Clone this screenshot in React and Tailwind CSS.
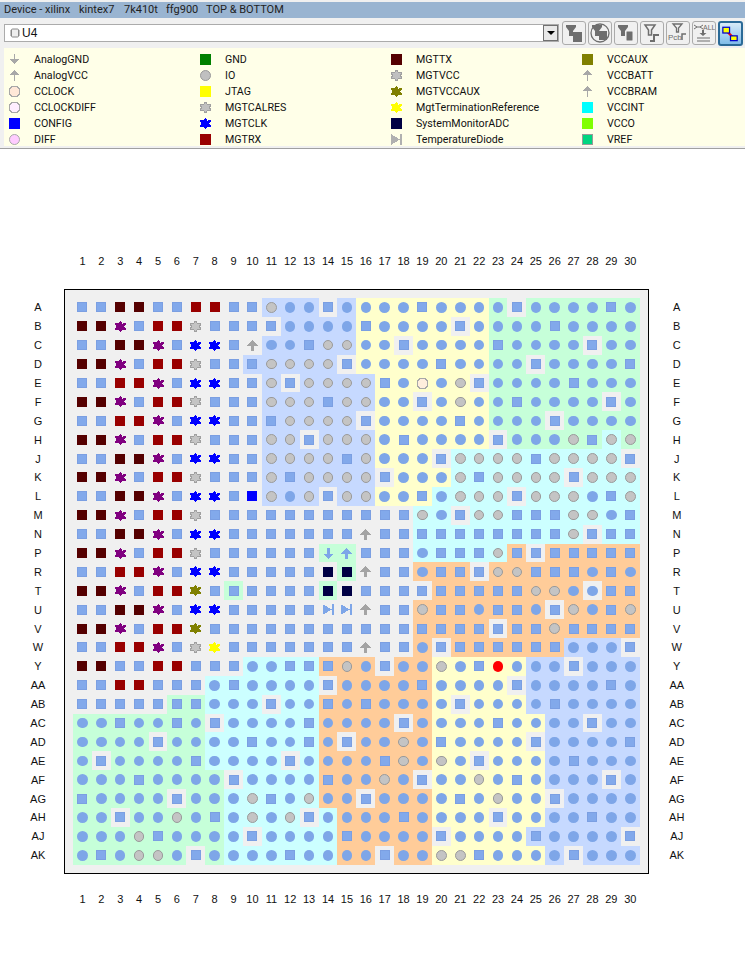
const COLS = Array.from({ length: 30 }, (_, i) => i + 1)
const ROWS = ['A', 'B', 'C', 'D', 'E', 'F', 'G', 'H', 'J', 'K', 'L', 'M', 'N', 'P', 'R', 'T', 'U', 'V', 'W', 'Y', 'AA', 'AB', 'AC', 'AD', 'AE', 'AF', 'AG', 'AH', 'AJ', 'AK']

const PINS = [
  'ssmmssrrssoccsc' + 'cccsccccsccccsc',
  'mmpsrrgsssscccc' + 'sccccsccccscccc',
  'ssmmpsbbsaccsoo' + 'ccsccccsccccscc',
  'mmpsrrgsssoooos' + 'ccccsccccsccccs',
  'ssrrpsbbssosooo' + 'oschcosccccsccc',
  'mmpsrrgsssoooso' + 'occscoccsccccsc',
  'ssrrpsbbsssoooo' + 'sccccsccccscccc',
  'mmpsrrgsssoosoo' + 'ocsccccscccosoo',
  'ssmmpsbbssoooos' + 'occcsoooosoooos',
  'mmpsrrgsssosooo' + 'oscccosoooosooo',
  'ssmmpsbbsBocoso' + 'occscooosooocso',
  'mmpsrrgssssssss' + 'sssocsoosssoocs',
  'ssmmpsbbsssssss' + 'assssssssssosss',
  'mmpsrrgssssssdu' + 'ssscsssosssssss',
  'ssrrpsbbsssssnn' + 'asscsssoossscsc',
  'mmpsrrvssssssnn' + 'sssssssssooccss',
  'ssmmpsbbssssstt' + 'assosscsscsocso',
  'mmpsrrvssssssss' + 'ssssssssssossss',
  'ssrrpsgysssssss' + 'asscssssssscccs',
  'mmssrrssscc' + 'ssso' + 'csccocsRcccsccc',
  'ssrrssscsccccsc' + 'cccsccccsccccsc',
  'ssssssscccsccsc' + 'sccccsccccscccc',
  'ccsccscsccccscc' + 'ccsccccsccccscc',
  'ccccsccccsccscs' + 'ccocsccccsccccs',
  'csccccsccccsccc' + 'csococsccccsccc',
  'cccsccccsccccsc' + 'cocsccocsccccsc',
  'sccccscccoscocc' + 'sccccscoccscccc',
  'ccsccocscocoscc' + 'ccsccccsccccscc',
  'cccosccccsccccs' + 'ccccsccccsccccs',
  'cscoocsccccsccc' + 'csccoosccccsccc',
]

const BANKS = [
  '..........BBB.B' + 'YYYYYYYG.GGGGGG',
  '...........BBBB' + 'YYYYY.YGGGGGGGG',
  '..........BBBBB' + 'YY.YYYYGGGGG.GG',
  '.........BBBBB.' + 'YYYYYYYGG.GGGGG',
  '..........B.BBB' + 'BYYYYY.GGGGGGGG',
  '..........BBBBB' + 'BYY.YYYGGGGGG.G',
  '..........BBBBB' + '.YYYYYYGGG.GGGG',
  '..........BB.BB' + 'BYYYYYY.GGGGGCG',
  '..........BBBBB' + 'BYYY.CCCCCCCCC.',
  '..........BBBBB' + 'B.YYYCCCCCC.CCC',
  '..........BBB.B' + 'BYYYCCCC.CCCCCC',
  '...............' + '...CC.CCCCCCCCC',
  '...............' + '...CCCCCCCCC.CC',
  '.............GG' + '...CCCCCO.OOOOO',
  '..............G' + '...OOO.OOOOOOOO',
  '........G....G.' + '....OOOOOOOO.OO',
  '...............' + '...OOOOOOO.OOOO',
  '...............' + '...OOOO.OOOOOOO',
  '...............' + '...O.OOOOOOBBB.',
  '.........CCCCOO' + 'O.OOYYYYYBB.BBB',
  '.......CCCCCC.O' + 'OOOOYYYY.BBBBBB',
  '.....GGCCC.CCOO' + 'OOOOY.YYYBBBBBB',
  'GGGGGGG.CCCCCOO' + 'OO.OYYYYYYBB.BB',
  'GGGG.GGCCCCCCO.' + 'OOOOYYYYY.BBBBB',
  'G.GGGGGCCCC.COO' + 'OOOOYY.YYYBBBBB',
  'GGGGGGGG.CCCCOO' + 'OOO.YYYYYYBBB.B',
  'GGGGG.GGCCCCCOO' + '.OOOYYYYYY.BBBB',
  'GG.GGGGGCCCC.CO' + 'OOOOYYY.YYBBBBB',
  'GGGGGGGGC.CCCCO' + 'OOOO.YYYYBBBBB.',
  'GGGGGG.GCCCCCCO' + 'O.OOYYYYYYB.BBB',
]

const BANK_BG = {
  '.': 'bg-[#f0f0f0]',
  B: 'bg-[#c6d9ff]',
  Y: 'bg-[#ffffcc]',
  G: 'bg-[#c6ffd9]',
  C: 'bg-[#ccffff]',
  O: 'bg-[#ffcc99]',
}

const STAR = '5.5,-0.3 7.5,2.5 11.2,2.2 9.5,5.5 11.2,8.8 7.5,8.5 5.5,11.3 3.5,8.5 -0.2,8.8 1.5,5.5 -0.2,2.2 3.5,2.5'
const HEX = '3,0.5 8,0.5 10.5,3 10.5,8 8,10.5 3,10.5 0.5,8 0.5,3'
const ARROW_UP = '5.5,0 11,5.5 7,5.5 7,11 4,11 4,5.5 0,5.5'
const ARROW_DOWN = '5.5,11 11,5.5 7,5.5 7,0 4,0 4,5.5 0,5.5'

function Square({ className }) {
  return <div className={`w-[10px] h-[10px] ${className}`} />
}

function Dot({ className }) {
  return <div className={`w-[10.5px] h-[10.5px] rounded-full ${className}`} />
}

function Shape({ children }) {
  return (
    <svg width="11" height="11" viewBox="0 0 11 11" shapeRendering="crispEdges" className="block flex-none">
      {children}
    </svg>
  )
}

function Pin({ kind }) {
  switch (kind) {
    case 's':
      return <Square className="border border-[#7b9fe2] bg-[#82a9eb]" />
    case 'm':
      return <Square className="bg-[#550000]" />
    case 'r':
      return <Square className="bg-[#990000]" />
    case 'n':
      return <Square className="bg-[#000044]" />
    case 'B':
      return <Square className="bg-[#0000ff]" />
    case 'p':
      return <Shape><polygon points={STAR} fill="#800080" /></Shape>
    case 'b':
      return <Shape><polygon points={STAR} fill="#0000ff" /></Shape>
    case 'v':
      return <Shape><polygon points={STAR} fill="#808000" /></Shape>
    case 'y':
      return <Shape><polygon points={STAR} fill="#ffff00" /></Shape>
    case 'g':
      return <Shape><polygon points={STAR} fill="#c4c4c4" stroke="#a0a0a0" /></Shape>
    case 'c':
      return <Dot className="bg-[#7ea6e8]" />
    case 'o':
      return <Dot className="border border-[#9a9a9a] bg-[#c4c4c4]" />
    case 'R':
      return <Dot className="bg-[#ff0000]" />
    case 'h':
      return <Shape><polygon points={HEX} fill="#ffeedd" stroke="#a8a8a8" /></Shape>
    case 'a':
      return <Shape><polygon points={ARROW_UP} fill="#a4a4a4" /></Shape>
    case 'u':
      return <Shape><polygon points={ARROW_UP} fill="#7ea6e8" /></Shape>
    case 'd':
      return <Shape><polygon points={ARROW_DOWN} fill="#7ea6e8" /></Shape>
    case 't':
      return <Shape><path d="M0 0.5 L9 5.5 L0 10.5 Z M9 0 H11 V11 H9 Z" fill="#7ea6e8" /></Shape>
    default:
      return null
  }
}

function LegendIcon({ type }) {
  switch (type) {
    case 'gnd':
      return <Shape><path d="M5 0 H6 V5 H11 L5.5 10 L0 5 H5 Z" fill="#a8a8a8" /></Shape>
    case 'vcc':
      return <Shape><polygon points="5.5,0 11,5 6,5 6,11 5,11 5,5 0,5" fill="#a8a8a8" /></Shape>
    case 'cclock':
      return <Shape><polygon points={HEX} fill="#ffe8d8" stroke="#a8a8a8" /></Shape>
    case 'cclockdiff':
      return <Shape><polygon points={HEX} fill="#ffeeff" stroke="#a8a8a8" /></Shape>
    case 'diff':
      return <div className="w-[11px] h-[11px] rounded-full border border-[#a8a8a8] bg-[#ffccff]" />
    case 'io':
      return <div className="w-[11px] h-[11px] rounded-full border border-[#9a9a9a] bg-[#c0c0c0]" />
    case 'grayStar':
      return <Shape><polygon points={STAR} fill="#c0c0c0" stroke="#a0a0a0" /></Shape>
    case 'blueStar':
      return <Shape><polygon points={STAR} fill="#0000ff" /></Shape>
    case 'oliveStar':
      return <Shape><polygon points={STAR} fill="#808000" /></Shape>
    case 'yellowStar':
      return <Shape><polygon points={STAR} fill="#ffff00" /></Shape>
    case 'diode':
      return <Shape><path d="M0 0 L9 5.5 L0 11 Z M9 0 H11 V11 H9 Z" fill="#b0b0b0" /></Shape>
    default:
      return <div className={`w-[11px] h-[11px] ${type}`} />
  }
}

const LEGEND = [
  [['gnd', 'AnalogGND'], ['vcc', 'AnalogVCC'], ['cclock', 'CCLOCK'], ['cclockdiff', 'CCLOCKDIFF'], ['bg-[#0000ff]', 'CONFIG'], ['diff', 'DIFF']],
  [['bg-[#008000]', 'GND'], ['io', 'IO'], ['bg-[#ffff00]', 'JTAG'], ['grayStar', 'MGTCALRES'], ['blueStar', 'MGTCLK'], ['bg-[#990000]', 'MGTRX']],
  [['bg-[#550000]', 'MGTTX'], ['grayStar', 'MGTVCC'], ['oliveStar', 'MGTVCCAUX'], ['yellowStar', 'MgtTerminationReference'], ['bg-[#000044]', 'SystemMonitorADC'], ['diode', 'TemperatureDiode']],
  [['bg-[#808000]', 'VCCAUX'], ['vcc', 'VCCBATT'], ['vcc', 'VCCBRAM'], ['bg-[#00ffff]', 'VCCINT'], ['bg-[#80ff00]', 'VCCO'], ['bg-[#00d580] border border-[#999999]', 'VREF']],
]

function ToolIcon({ index }) {
  const dark = '#6e6e6e'
  const funnel = <path d="M3 3 H13 V5 L10 9 V14 H6 V9 L3 5 Z" fill={dark} />
  const outlineFunnel = <path d="M4 3 H14 L10.5 8 V13 H7.5 V8 Z" fill="none" stroke={dark} strokeWidth="1.5" />
  return (
    <svg width="22" height="22" viewBox="0 0 22 22">
      {index === 0 && (
        <>
          {funnel}
          <rect x="10" y="10" width="9" height="10" fill={dark} />
        </>
      )}
      {index === 1 && (
        <>
          <circle cx="11" cy="11" r="9" fill="none" stroke={dark} strokeWidth="1.3" />
          {funnel}
          <rect x="10" y="9" width="8" height="9" fill={dark} />
        </>
      )}
      {index === 2 && (
        <>
          {funnel}
          <rect x="11" y="9" width="7" height="10" rx="1" fill={dark} stroke="#f0f0f0" />
        </>
      )}
      {index === 3 && (
        <>
          {outlineFunnel}
          <path d="M9 19 H13 V13 H18" fill="none" stroke={dark} strokeWidth="2" />
        </>
      )}
      {index === 4 && (
        <>
          <path d="M6 2 H15 L11.5 6 V10 H9.5 V6 Z" fill="none" stroke={dark} strokeWidth="1.3" />
          <text x="1" y="18" fontSize="8" fontFamily="Liberation Sans, sans-serif" fill={dark}>Pcb</text>
          <path d="M15 18 V12 H19" fill="none" stroke={dark} strokeWidth="1.5" />
        </>
      )}
      {index === 5 && (
        <>
          <path d="M1 3 L4 5 H7 L10 3 M1 7 L4 5 M7 5 L10 7" fill="none" stroke={dark} />
          <text x="10" y="8" fontSize="7" fontFamily="Liberation Sans, sans-serif" fill={dark}>ALL</text>
          <path d="M9 8 H11 V11 H13.5 L10 14 L6.5 11 H9 Z" fill={dark} />
          <path d="M4 16 H17 M4 19 H17" stroke={dark} />
        </>
      )}
      {index === 6 && (
        <>
          <path d="M6 8 L14 16" stroke="#ff0000" strokeWidth="2.5" fill="none" />
          <rect x="3" y="5" width="7" height="6" fill="#ffff00" stroke="#0000cc" strokeWidth="1.3" />
          <rect x="11" y="14" width="7" height="5" fill="#ffff00" stroke="#0000cc" strokeWidth="1.3" />
        </>
      )}
    </svg>
  )
}

function AxisNumbers({ className }) {
  return (
    <div className={`ml-[73px] w-[567px] h-[16px] grid grid-cols-[repeat(30,18.9px)] items-center text-center ${className}`}>
      {COLS.map(c => <span key={c}>{c}</span>)}
    </div>
  )
}

function AxisLetters({ className }) {
  return (
    <div className={`grid grid-rows-[repeat(30,18.9px)] items-center text-center pt-[9px] ${className}`}>
      {ROWS.map(r => <span key={r}>{r}</span>)}
    </div>
  )
}

export default function App() {
  return (
    <div className="w-[745px] h-[958px] overflow-hidden flex flex-col bg-[#f0f0f0] text-[11px] leading-[16px] text-[#111111] font-['Liberation_Sans',Arial,sans-serif]">
      <div className="mt-[2px] h-[16px] bg-[#99b4d1] flex items-center pl-[4px] text-[11px] text-[#222222] font-['Roboto',sans-serif]">
        <span className="w-[75px]">Device - xilinx</span>
        <span className="w-[45px]">kintex7</span>
        <span className="w-[42px]">7k410t</span>
        <span className="w-[40px]">ffg900</span>
        <span>TOP &amp; BOTTOM</span>
      </div>

      <div className="mt-[2px] h-[26px] flex items-center pl-[4px] gap-[3px] overflow-hidden">
        <div className="flex-none w-[555px] h-[18px] flex items-center border border-[#ababab] bg-white pl-[5px] gap-[2px] text-[12px]">
          <svg width="10" height="10" viewBox="0 0 10 10" className="flex-none">
            <rect x="1.5" y="1" width="7" height="8" rx="1" fill="#eeeeee" stroke="#888888" />
            <path d="M0 3 H1 M0 5 H1 M0 7 H1 M9 3 H10 M9 5 H10 M9 7 H10" stroke="#888888" />
          </svg>
          <span>U4</span>
          <div className="ml-auto w-[15px] h-[16px] border border-[#707070] bg-[#e8e8e8] flex items-center justify-center">
            <div className="w-0 h-0 border-x-[4px] border-x-transparent border-t-[4px] border-t-black" />
          </div>
        </div>
        <div className="flex-none flex items-center gap-[2px]">
          {[0, 1, 2, 3, 4, 5].map(i => (
            <div key={i} className="flex-none w-[24px] h-[24px] flex items-center justify-center rounded-[3px] border border-[#ababab] bg-[#f0f0f0]">
              <ToolIcon index={i} />
            </div>
          ))}
          <div className="flex-none w-[25px] h-[25px] flex items-center justify-center rounded-[3px] border-2 border-[#2b6a97] bg-gradient-to-b from-[#d8ebf8] to-[#7fbce8]">
            <ToolIcon index={6} />
          </div>
          <div className="flex-none w-[25px] h-[25px] rounded-[3px] border-2 border-[#2b6a97] bg-[#7fbce8]" />
        </div>
      </div>

      <div className="ml-[4px] mt-[2px] h-[98px] pt-[3px] bg-[#ffffe8] grid grid-cols-[191px_191px_191px_1fr] text-[10.67px] font-['Roboto',sans-serif]">
        {LEGEND.map((col, i) => (
          <div key={i} className="flex flex-col">
            {col.map(([type, label]) => (
              <div key={label} className="h-[16px] flex items-center pl-[5px]">
                <div className="w-[25px] flex-none">
                  <LegendIcon type={type} />
                </div>
                <span className="pt-[1px]">{label}</span>
              </div>
            ))}
          </div>
        ))}
      </div>

      <div className="mt-[2px] h-[1px] bg-[#a0a0a0]" />

      <div className="flex-1 bg-white pt-[104px]">
        <AxisNumbers />
        <div className="mt-[20px] flex">
          <AxisLetters className="w-[76px]" />
          <div className="-ml-[12px] border border-black bg-[#f0f0f0] p-[8px]">
            <div className="grid grid-cols-[repeat(30,18.9px)] grid-rows-[repeat(30,18.9px)]">
              {PINS.map((row, r) =>
                row.split('').map((kind, c) => (
                  <div key={`${r}-${c}`} className={`flex items-center justify-center ${BANK_BG[BANKS[r][c]]}`}>
                    <Pin kind={kind} />
                  </div>
                ))
              )}
            </div>
          </div>
          <AxisLetters className="w-[56px]" />
        </div>
        <AxisNumbers className="mt-[17px]" />
      </div>
    </div>
  )
}
